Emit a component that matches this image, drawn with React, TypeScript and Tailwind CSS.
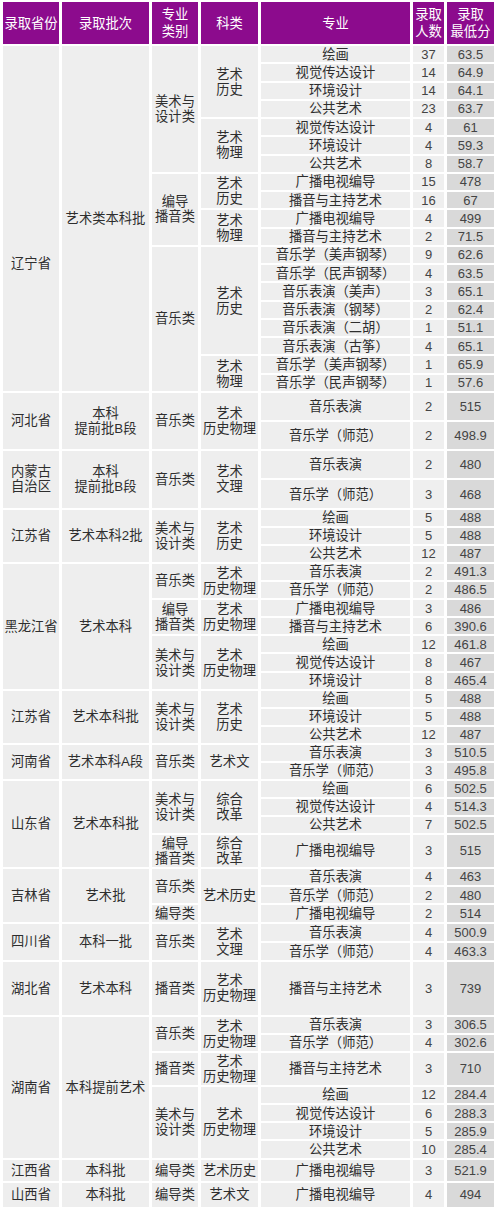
import React from "react";

type Cell = string | [string, number?, string?];
type Row = { h: string; c: Cell[] };

const rows: Row[] = [
  // 辽宁省
  { h: "h-[16.25px]", c: [["辽宁省", 19, "pt-[90px]"], ["艺术类本科批", 19], ["美术与\n设计类", 7], ["艺术\n历史", 4], "绘画", "37", "63.5"] },
  { h: "h-[16.25px]", c: ["视觉传达设计", "14", "64.9"] },
  { h: "h-[16.25px]", c: ["环境设计", "14", "64.1"] },
  { h: "h-[16.25px]", c: ["公共艺术", "23", "63.7"] },
  { h: "h-[16.25px]", c: [["艺术\n物理", 3], "视觉传达设计", "4", "61"] },
  { h: "h-[16.25px]", c: ["环境设计", "4", "59.3"] },
  { h: "h-[16.25px]", c: ["公共艺术", "8", "58.7"] },
  { h: "h-[16.25px]", c: [["编导\n播音类", 4], ["艺术\n历史", 2], "广播电视编导", "15", "478"] },
  { h: "h-[16.25px]", c: ["播音与主持艺术", "16", "67"] },
  { h: "h-[16.25px]", c: [["艺术\n物理", 2], "广播电视编导", "4", "499"] },
  { h: "h-[16.25px]", c: ["播音与主持艺术", "2", "71.5"] },
  { h: "h-[16.25px]", c: [["音乐类", 8], ["艺术\n历史", 6], "音乐学（美声钢琴）", "9", "62.6"] },
  { h: "h-[16.25px]", c: ["音乐学（民声钢琴）", "4", "63.5"] },
  { h: "h-[16.25px]", c: ["音乐表演（美声）", "3", "65.1"] },
  { h: "h-[16.25px]", c: ["音乐表演（钢琴）", "2", "62.4"] },
  { h: "h-[16.25px]", c: ["音乐表演（二胡）", "1", "51.1"] },
  { h: "h-[16.25px]", c: ["音乐表演（古筝）", "4", "65.1"] },
  { h: "h-[16.25px]", c: [["艺术\n物理", 2], "音乐学（美声钢琴）", "1", "65.9"] },
  { h: "h-[16.25px]", c: ["音乐学（民声钢琴）", "1", "57.6"] },
  // 河北省
  { h: "h-[27px]", c: [["河北省", 2], ["本科\n提前批B段", 2], ["音乐类", 2], ["艺术\n历史物理", 2], "音乐表演", "2", "515"] },
  { h: "h-[27px]", c: ["音乐学（师范）", "2", "498.9"] },
  // 内蒙古
  { h: "h-[27.5px]", c: [["内蒙古\n自治区", 2], ["本科\n提前批B段", 2], ["音乐类", 2], ["艺术\n文理", 2], "音乐表演", "2", "480"] },
  { h: "h-[27.5px]", c: ["音乐学（师范）", "3", "468"] },
  // 江苏省
  { h: "h-[16px]", c: [["江苏省", 3], ["艺术本科2批", 3], ["美术与\n设计类", 3], ["艺术\n历史", 3], "绘画", "5", "488"] },
  { h: "h-[16px]", c: ["环境设计", "5", "488"] },
  { h: "h-[16px]", c: ["公共艺术", "12", "487"] },
  // 黑龙江省
  { h: "h-[16.15px]", c: [["黑龙江省", 7], ["艺术本科", 7], ["音乐类", 2], ["艺术\n历史物理", 2], "音乐表演", "2", "491.3"] },
  { h: "h-[16.15px]", c: ["音乐学（师范）", "2", "486.5"] },
  { h: "h-[16.15px]", c: [["编导\n播音类", 2], ["艺术\n历史物理", 2], "广播电视编导", "3", "486"] },
  { h: "h-[16.15px]", c: ["播音与主持艺术", "6", "390.6"] },
  { h: "h-[16.15px]", c: [["美术与\n设计类", 3], ["艺术\n历史物理", 3], "绘画", "12", "461.8"] },
  { h: "h-[16.15px]", c: ["视觉传达设计", "8", "467"] },
  { h: "h-[16.15px]", c: ["环境设计", "8", "465.4"] },
  // 江苏省 2
  { h: "h-[16px]", c: [["江苏省", 3], ["艺术本科批", 3], ["美术与\n设计类", 3], ["艺术\n历史", 3], "绘画", "5", "488"] },
  { h: "h-[16px]", c: ["环境设计", "5", "488"] },
  { h: "h-[16px]", c: ["公共艺术", "12", "487"] },
  // 河南省
  { h: "h-[16px]", c: [["河南省", 2], ["艺术本科A段", 2], ["音乐类", 2], ["艺术文", 2], "音乐表演", "3", "510.5"] },
  { h: "h-[16px]", c: ["音乐学（师范）", "3", "495.8"] },
  // 山东省
  { h: "h-[16px]", c: [["山东省", 4], ["艺术本科批", 4], ["美术与\n设计类", 3], ["综合\n改革", 3], "绘画", "6", "502.5"] },
  { h: "h-[16px]", c: ["视觉传达设计", "4", "514.3"] },
  { h: "h-[16px]", c: ["公共艺术", "7", "502.5"] },
  { h: "h-[32px]", c: ["编导\n播音类", "综合\n改革", "广播电视编导", "3", "515"] },
  // 吉林省
  { h: "h-[16.3px]", c: [["吉林省", 3], ["艺术批", 3], ["音乐类", 2], ["艺术历史", 3], "音乐表演", "4", "463"] },
  { h: "h-[16.3px]", c: ["音乐学（师范）", "2", "480"] },
  { h: "h-[16.3px]", c: ["编导类", "广播电视编导", "2", "514"] },
  // 四川省
  { h: "h-[17px]", c: [["四川省", 2], ["本科一批", 2], ["音乐类", 2], ["艺术\n文理", 2], "音乐表演", "4", "500.9"] },
  { h: "h-[17px]", c: ["音乐学（师范）", "4", "463.3"] },
  // 湖北省
  { h: "h-[53px]", c: ["湖北省", "艺术本科", "播音类", "艺术\n历史物理", "播音与主持艺术", "3", "739"] },
  // 湖南省
  { h: "h-[16px]", c: [["湖南省", 7], ["本科提前艺术", 7], ["音乐类", 2], ["艺术\n历史物理", 2], "音乐表演", "3", "306.5"] },
  { h: "h-[16px]", c: ["音乐学（师范）", "4", "302.6"] },
  { h: "h-[32px]", c: ["播音类", "艺术\n历史物理", "播音与主持艺术", "3", "710"] },
  { h: "h-[16.25px]", c: [["美术与\n设计类", 4], ["艺术\n历史物理", 4], "绘画", "12", "284.4"] },
  { h: "h-[16.25px]", c: ["视觉传达设计", "6", "288.3"] },
  { h: "h-[16.25px]", c: ["环境设计", "5", "285.9"] },
  { h: "h-[16.25px]", c: ["公共艺术", "10", "285.4"] },
  // 江西省
  { h: "h-[21px]", c: ["江西省", "本科批", "编导类", "艺术历史", "广播电视编导", "3", "521.9"] },
  // 山西省
  { h: "h-[24px]", c: ["山西省", "本科批", "编导类", "艺术文", "广播电视编导", "4", "494"] },
];

const headers = ["录取省份", "录取批次", "专业\n类别", "科类", "专业", "录取\n人数", "录取\n最低分"];

export default function App() {
  return (
    <div className="w-[500px] min-h-[1211px] bg-white" style={{ fontFamily: '"Liberation Sans", "Noto Sans CJK SC", sans-serif' }}>
      <table className="table-fixed w-[497px] border-separate border-spacing-x-[3px] border-spacing-y-[2px]">
        <colgroup>
          <col className="w-[56px]" />
          <col className="w-[87px]" />
          <col className="w-[46px]" />
          <col className="w-[57px]" />
          <col className="w-[149px]" />
          <col className="w-[31px]" />
          <col className="w-[47px]" />
        </colgroup>
        <thead>
          <tr className="h-[42px]">
            {headers.map((t, i) => (
              <th
                key={i}
                className="bg-[#8c0b8d] text-white font-normal text-[13.3px] leading-[17px] p-0 text-center align-middle whitespace-pre-line"
              >
                {t}
              </th>
            ))}
          </tr>
        </thead>
        <tbody>
          {rows.map((r, ri) => (
            <tr key={ri} className={r.h}>
              {r.c.map((cell, ci) => {
                const text = typeof cell === "string" ? cell : cell[0];
                const rs = typeof cell === "string" ? 1 : cell[1] ?? 1;
                const extra = typeof cell === "string" ? "" : cell[2] ?? "";
                const fromEnd = r.c.length - 1 - ci;
                let cls = "bg-[#eeeeee] text-[#2e2e2e] text-[13.3px] leading-[15px]";
                if (fromEnd === 0) cls = "bg-[#d9d9d9] text-[#444444] text-[13px] leading-[15px]";
                else if (fromEnd === 1) cls = "bg-[#efefef] text-[#444444] text-[13px] leading-[15px]";
                return (
                  <td
                    key={ci}
                    rowSpan={rs}
                    className={`${cls} ${extra} p-0 text-center align-middle whitespace-pre-line`}
                  >
                    {text}
                  </td>
                );
              })}
            </tr>
          ))}
        </tbody>
      </table>
    </div>
  );
}
